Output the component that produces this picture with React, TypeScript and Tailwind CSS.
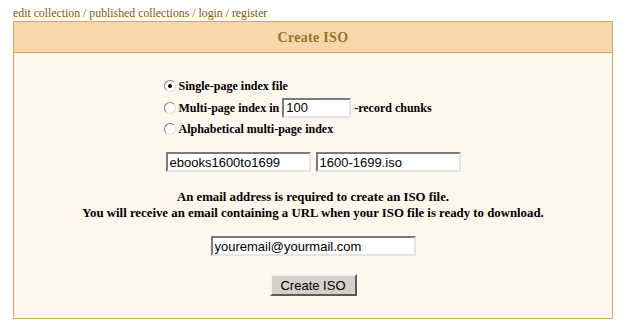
import React from 'react';

const Radio: React.FC<{ checked?: boolean }> = ({ checked }) => (
  <span className="relative inline-block w-[12px] h-[12px] rounded-full bg-white border border-t-[#808080] border-l-[#808080] border-b-[#e0e0e0] border-r-[#e0e0e0] shrink-0">
    {checked && <span className="absolute left-[3px] top-[3px] w-[4px] h-[4px] rounded-full bg-black" />}
  </span>
);

const inputCls =
  'h-[20px] bg-white px-[2px] text-[13px] font-normal text-black font-["Liberation_Sans",Arial,sans-serif] border-2 border-t-[#7a7a7a] border-l-[#7a7a7a] border-b-[#e4e4e4] border-r-[#e4e4e4] outline-none';

const App: React.FC = () => {
  return (
    <div className="w-[628px] h-[333px] bg-white font-['Liberation_Serif','Times_New_Roman',serif] overflow-hidden">
      {/* top links */}
      <div className="pl-[13px] pt-[6px] h-[21px] text-[11.8px] leading-[14px] text-[#7a5a14]">
        <a>edit collection</a> / <a>published collections</a> / <a>login</a> / <a>register</a>
      </div>

      {/* panel */}
      <div className="ml-[13px] w-[600px] h-[298px] border border-[#d2ab55] bg-[#fdf7ed] flex flex-col">
        <div className="h-[31px] bg-[#f5d7a9] border-b border-[#d2ab55] flex items-center justify-center">
          <span className="text-[14px] font-bold text-[#a0702a] tracking-[0.3px]">Create ISO</span>
        </div>

        <div className="flex flex-col items-center pt-[23px]">
          {/* options */}
          <div className="w-[285px] mr-[14px] flex flex-col text-[12px] font-bold text-black leading-[14px]">
            <label className="flex items-center gap-[3px] h-[21px] pb-[2px]">
              <Radio checked />
              <span>Single-page index file</span>
            </label>
            <label className="flex items-center gap-[3px] h-[21px]">
              <Radio />
              <span>Multi-page index in</span>
              <input className={`${inputCls} w-[69px]`} defaultValue="100" />
              <span>-record chunks</span>
            </label>
            <label className="flex items-center gap-[3px] h-[21px]">
              <Radio />
              <span>Alphabetical multi-page index</span>
            </label>
          </div>

          {/* names */}
          <div className="flex gap-[5px] mt-[13px]">
            <input className={`${inputCls} w-[145px]`} defaultValue="ebooks1600to1699" />
            <input className={`${inputCls} w-[145px]`} defaultValue="1600-1699.iso" />
          </div>

          {/* email note */}
          <div className="mt-[17px] text-center text-[12.8px] font-bold text-black leading-[16px]">
            <p>An email address is required to create an ISO file.</p>
            <p>You will receive an email containing a URL when your ISO file is ready to download.</p>
          </div>

          <input className={`${inputCls} w-[205px] mt-[15px]`} defaultValue="youremail@yourmail.com" />

          <button className="mt-[18px] w-[87px] h-[22px] bg-[#d4d0c8] text-[13px] text-black font-['Liberation_Sans',Arial,sans-serif] border-2 border-t-[#f4f4f4] border-l-[#f4f4f4] border-b-[#5a5a5a] border-r-[#5a5a5a]">
            Create ISO
          </button>
        </div>
      </div>
    </div>
  );
};

export default App;
